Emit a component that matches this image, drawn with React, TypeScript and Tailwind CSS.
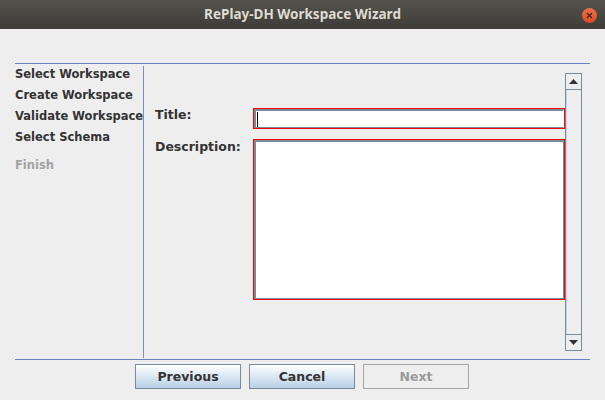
const steps = ["Select Workspace", "Create Workspace", "Validate Workspace", "Select Schema"];

const dialogFont = { fontFamily: '"DejaVu Sans", "Liberation Sans", sans-serif' };

const ArrowUp = () => (
  <svg width="9" height="5" viewBox="0 0 9 5">
    <path d="M4.5 0 L9 5 L0 5 Z" fill="#333333" />
  </svg>
);

const ArrowDown = () => (
  <svg width="9" height="5" viewBox="0 0 9 5">
    <path d="M0 0 L9 0 L4.5 5 Z" fill="#333333" />
  </svg>
);

const WizardButton = ({ label, disabled }: { label: string; disabled?: boolean }) =>
  disabled ? (
    <button className="h-[25px] w-[106px] border border-[#a6a6a6] bg-[#eeeeee] pt-px text-[12.5px] font-bold text-[#999999]">
      {label}
    </button>
  ) : (
    <button className="h-[25px] w-[106px] border border-[#7a8a99] bg-gradient-to-b from-white to-[#b8cfe5] pt-px text-[12.5px] font-bold text-[#333333]">
      {label}
    </button>
  );

const ScrollBar = () => (
  <div className="flex w-[17px] flex-col border border-[#7a8a99]">
    <div className="flex h-[16px] items-center justify-center border-b border-[#7a8a99] bg-[#eeeeee]">
      <ArrowUp />
    </div>
    <div className="flex-1 border-l border-[#c6d6e6] bg-[#eeeeee]" />
    <div className="flex h-[16px] items-center justify-center border-t border-[#7a8a99] bg-[#eeeeee]">
      <ArrowDown />
    </div>
  </div>
);

export default function App() {
  return (
    <div className="flex h-[400px] w-[605px] flex-col bg-[#eeeeee]" style={dialogFont}>
      {/* window title bar */}
      <div className="relative flex h-[29px] items-center justify-center bg-gradient-to-b from-[#55534d] to-[#3d3c38]">
        <span
          className="text-[13.5px] font-bold text-[#dfdbd2]"
          style={{ fontFamily: '"Noto Sans", "DejaVu Sans", sans-serif' }}
        >
          RePlay-DH Workspace Wizard
        </span>
        <div className="absolute right-[8px] top-[8px] flex h-[15px] w-[15px] items-center justify-center rounded-full bg-gradient-to-b from-[#f0714a] to-[#d9491f]">
          <svg width="7" height="7" viewBox="0 0 7 7">
            <path d="M1 1 L6 6 M6 1 L1 6" stroke="#3b2418" strokeWidth="1.2" />
          </svg>
        </div>
      </div>

      <div className="flex flex-1 flex-col px-[15px] pt-[34px]">
        <div className="h-px bg-[#6382bf]" />

        <div className="flex h-[295px]">
          {/* steps */}
          <div className="flex w-[128px] flex-col pt-[2px] text-[11.5px] font-bold leading-[16px] text-[#333333]">
            {steps.map((s) => (
              <div key={s} className="mb-[5px] whitespace-nowrap">
                {s}
              </div>
            ))}
            <div className="mt-[7px] text-[#a3a3a3]">Finish</div>
          </div>
          <div className="mt-[2px] mb-px w-px bg-[#7d90bd]" />

          {/* page */}
          <div className="flex flex-1 pt-[9px] pb-[8px] pr-[8px]">
            <div className="flex-1 pl-[11px] pt-[35px]">
              <div className="grid grid-cols-[98px_1fr] gap-y-[10px] text-[12.5px] font-bold leading-[14px] text-[#333333]">
                <div>Title:</div>
                <div className="h-[21px] border border-[#ff0000]">
                  <div className="flex h-full items-center border border-l-2 border-t-2 border-[#7a8a99] border-r-white bg-white pl-[1px]">
                    <div className="h-[15px] w-px bg-black" />
                  </div>
                </div>
                <div className="pt-px">Description:</div>
                <div className="h-[161px] border border-[#ff0000]">
                  <div className="h-full border border-l-2 border-t-2 border-[#7a8a99] bg-white" />
                </div>
              </div>
            </div>
            <ScrollBar />
          </div>
        </div>

        <div className="h-px bg-[#6382bf]" />

        <div className="mt-[4px] flex justify-center gap-[8px] pr-px">
          <WizardButton label="Previous" />
          <WizardButton label="Cancel" />
          <WizardButton label="Next" disabled />
        </div>
      </div>
    </div>
  );
}
